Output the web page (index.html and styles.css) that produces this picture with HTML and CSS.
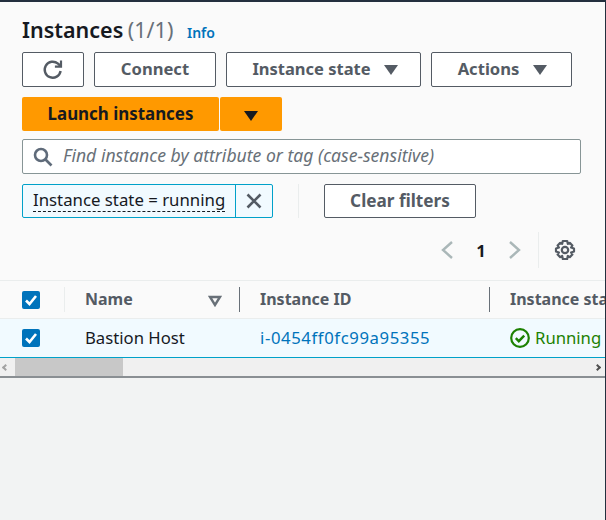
FILE: index.html
```html
<!DOCTYPE html>
<html lang="en">
<head>
    <meta charset="UTF-8">
    <meta name="viewport" content="width=device-width, initial-scale=1.0">
    <title>Instances</title>
    <link rel="stylesheet" href="styles.css">
</head>
<body>
    <div class="panel">
        <div class="panel-head">
            <h1 class="title">Instances <span class="count">(1/1)</span> <a class="info">Info</a></h1>

            <div class="actions">
                <button class="btn btn-refresh">
                    <svg width="22" height="22" viewBox="0 0 22 22" fill="none" stroke="#545b64" stroke-width="2.4">
                        <path d="M18.6 12a8 8 0 1 1-2.6-7.3L18.6 7"/>
                        <path d="M19 1.5V7.6h-6.1" stroke-width="2.2"/>
                    </svg>
                </button>
                <button class="btn btn-connect"><span class="btn-text">Connect</span></button>
                <button class="btn btn-state"><span class="btn-text">Instance state</span> <span class="caret"></span></button>
                <button class="btn btn-actions"><span class="btn-text">Actions</span> <span class="caret"></span></button>
            </div>

            <div class="launch">
                <button class="launch-main"><span class="btn-text">Launch instances</span></button>
                <button class="launch-drop"><span class="caret caret-dark"></span></button>
            </div>

            <div class="search">
                <svg width="20" height="20" viewBox="0 0 20 20" fill="none" stroke="#5f6b7a" stroke-width="2.6">
                    <circle cx="8" cy="8" r="6"/>
                    <path d="M12.5 12.5l6 6"/>
                </svg>
                <span class="search-text">Find instance by attribute or tag (case-sensitive)</span>
            </div>

            <div class="filters">
                <div class="token">
                    <span class="token-label"><span class="token-text">Instance state = running</span></span>
                    <span class="token-close">
                        <svg width="16" height="16" viewBox="0 0 16 16" fill="none" stroke="#545b64" stroke-width="2.6">
                            <path d="M1.5 1.5l13 13M14.5 1.5l-13 13"/>
                        </svg>
                    </span>
                </div>
                <span class="filters-sep"></span>
                <button class="btn btn-clear"><span class="btn-text">Clear filters</span></button>
            </div>

            <div class="pager">
                <svg width="14" height="20" viewBox="0 0 14 20" fill="none" stroke="#aab7b8" stroke-width="2.4">
                    <path d="M12 2L3 10l9 8"/>
                </svg>
                <span class="page-num">1</span>
                <svg width="14" height="20" viewBox="0 0 14 20" fill="none" stroke="#aab7b8" stroke-width="2.4">
                    <path d="M2 2l9 8-9 8"/>
                </svg>
                <span class="pager-sep"></span>
                <svg width="22" height="22" viewBox="0 0 22 22" fill="none" stroke="#545b64" stroke-width="2.2">
                    <path d="M8.8 2h4.4l.6 2.8 2-.9 2.6 2.6-1.3 2 2.9 1v3l-2.9 1 1.3 2-2.6 2.6-2-1.2-.6 3.1H8.8l-.6-3.1-2 1.2-2.6-2.6 1.3-2-2.9-1v-3l2.9-1-1.3-2 2.6-2.6 2 .9z" stroke-linejoin="round"/>
                    <circle cx="11" cy="11" r="3.2"/>
                </svg>
            </div>
        </div>

        <div class="table-wrap">
            <div class="row row-head">
                <div class="cell cell-check">
                    <span class="check"><svg width="18" height="18" viewBox="0 0 18 18" fill="none" stroke="#fff" stroke-width="2.6"><path d="M4 9.5l3.5 3.5L14 5"/></svg></span>
                    <span class="head-sep head-sep-light"></span>
                </div>
                <div class="cell cell-name">
                    Name
                    <svg class="sort" width="14" height="12" viewBox="0 0 14 12" fill="none" stroke="#687078" stroke-width="2.4"><path d="M2 2h10L7 10z"/></svg>
                    <span class="head-sep"></span>
                </div>
                <div class="cell cell-id">Instance ID <span class="head-sep"></span></div>
                <div class="cell cell-state">Instance state</div>
            </div>
            <div class="row row-body">
                <div class="cell cell-check">
                    <span class="check"><svg width="18" height="18" viewBox="0 0 18 18" fill="none" stroke="#fff" stroke-width="2.6"><path d="M4 9.5l3.5 3.5L14 5"/></svg></span>
                </div>
                <div class="cell cell-name">Bastion Host</div>
                <div class="cell cell-id"><a class="link">i-0454ff0fc99a95355</a></div>
                <div class="cell cell-state running">
                    <svg class="status-icon" width="20" height="20" viewBox="0 0 20 20" fill="none" stroke="#1d8102" stroke-width="2.2">
                        <circle cx="10" cy="10" r="8.8"/>
                        <path d="M5.8 10.2l3 3 5.4-5.6" stroke-width="2.4"/>
                    </svg>
                    Running
                </div>
            </div>
        </div>

        <div class="scrollbar">
            <span class="arrow arrow-left"></span>
            <span class="thumb"></span>
            <span class="arrow arrow-right"></span>
        </div>
    </div>
</body>
</html>
```

FILE: styles.css
```css
* {
    box-sizing: border-box;
}
html, body {
    height: 100%;
}
body {
    margin: 0;
    overflow: hidden;
    font-family: "Noto Sans", Arial, sans-serif;
    background-color: #f2f3f3;
    color: #16191f;
    border-top: 2px solid #232f3e;
    border-right: 1px solid #232f3e;
}
button {
    font-family: inherit;
    cursor: pointer;
}
.panel {
    background-color: #fafafa;
    border-bottom: 2px solid #8a8f93;
}
.panel-head {
    padding: 13px 24px 0 22px;
}
.title {
    margin: 0;
    height: 37px;
    font-size: 21.5px;
    font-weight: 600;
    line-height: 29px;
}
.count {
    margin-left: -1px;
    color: #687078;
    font-weight: 400;
}
.info {
    margin-left: 8px;
    color: #0073bb;
    font-size: 14px;
    font-weight: 600;
}
.actions {
    display: flex;
    gap: 10px;
}
.btn {
    display: flex;
    align-items: center;
    justify-content: center;
    height: 35px;
    padding: 0;
    background: #fff;
    border: 1px solid #545b64;
    border-radius: 2px;
    color: #545b64;
    font-size: 16.6px;
    font-weight: 700;
}
.btn-text {
    position: relative;
    top: -1px;
}
.btn-refresh {
    width: 62px;
}
.btn-connect {
    width: 122px;
}
.btn-state {
    width: 195px;
    gap: 13px;
    padding-left: 3px;
    font-size: 16.5px;
}
.btn-actions {
    width: 141px;
    gap: 14px;
    padding-left: 2px;
}
.caret {
    display: inline-block;
    width: 0;
    height: 0;
    border-left: 7px solid transparent;
    border-right: 7px solid transparent;
    border-top: 10px solid #545b64;
}
.caret-dark {
    border-top-color: #16191f;
}
.launch {
    display: flex;
    gap: 1px;
    margin-top: 10px;
}
.launch-main,
.launch-drop {
    height: 34px;
    background-color: #ff9900;
    border: none;
    border-radius: 2px;
    color: #16191f;
    font-size: 16.9px;
    font-weight: 700;
}
.launch-main {
    width: 197px;
    padding: 0;
}
.launch-drop {
    width: 62px;
}
.search {
    display: flex;
    align-items: center;
    gap: 10px;
    height: 35px;
    margin-top: 8px;
    padding-left: 10px;
    background: #fff;
    border: 1px solid #879596;
    border-radius: 2px;
}
.search-text {
    position: relative;
    top: -2px;
    color: #687078;
    font-size: 17.6px;
    font-style: italic;
}
.filters {
    display: flex;
    align-items: center;
    margin-top: 10px;
    height: 34px;
}
.token {
    display: flex;
    width: 251px;
    height: 34px;
    background-color: #f1faff;
    border: 1px solid #00a1c9;
    border-radius: 2px;
}
.token-label {
    flex: 1;
    padding-left: 10px;
    font-size: 16.8px;
    line-height: 30px;
}
.token-text {
    display: inline-block;
    line-height: 22px;
    border-bottom: 1px dashed #16191f;
}
.token-close {
    display: flex;
    align-items: center;
    justify-content: center;
    width: 37px;
    border-left: 1px solid #00a1c9;
}
.filters-sep {
    width: 1px;
    height: 34px;
    margin: 0 25px;
    background-color: #eaeded;
}
.btn-clear {
    width: 152px;
    height: 34px;
    font-size: 17.2px;
}
.pager {
    display: flex;
    align-items: center;
    justify-content: flex-end;
    height: 36px;
    margin-top: 14px;
    margin-right: 5px;
}
.page-num {
    width: 54px;
    text-align: center;
    font-size: 16.6px;
    font-weight: 700;
}
.pager-sep {
    width: 1px;
    height: 36px;
    margin: 0 15px 0 16px;
    background-color: #eaeded;
}
.table-wrap {
    margin-top: 12px;
    border-top: 1px solid #eaeded;
}
.row {
    display: flex;
    align-items: center;
}
.row-head {
    height: 38px;
    color: #545b64;
    font-size: 16px;
    font-weight: 700;
    border-bottom: 1px solid #eaeded;
}
.row-body {
    height: 39px;
    background-color: #f1faff;
    border-bottom: 1px solid #00a1c9;
    font-size: 16.7px;
}
.cell {
    display: flex;
    align-items: center;
    position: relative;
    height: 100%;
    white-space: nowrap;
    overflow: hidden;
}
.cell-check {
    width: 65px;
    padding-left: 22px;
}
.cell-name {
    width: 175px;
    padding: 0 0 2px 20px;
}
.cell-id {
    width: 250px;
    padding: 0 0 2px 20px;
}
.cell-state {
    flex: 1;
    padding: 0 0 2px 20px;
}
.check {
    display: flex;
    width: 18px;
    height: 18px;
    background-color: #0073bb;
    border-radius: 2px;
}
.head-sep {
    position: absolute;
    right: 0;
    top: 6px;
    width: 1px;
    height: 25px;
    background-color: #687078;
}
.head-sep-light {
    background-color: #eaeded;
}
.sort {
    position: absolute;
    right: 18px;
    top: 14px;
}
.link {
    color: #0073bb;
    letter-spacing: 0.6px;
}
.running {
    gap: 5px;
    color: #1d8102;
}
.status-icon {
    margin-top: 2px;
}
.scrollbar {
    display: flex;
    align-items: center;
    height: 18px;
    background-color: #f0f0f0;
}
.thumb {
    width: 108px;
    height: 18px;
    margin-left: 7px;
    background-color: #c8c8c8;
}
.arrow {
    width: 5px;
    height: 5px;
    border-left: 2px solid #a3a3a3;
    border-bottom: 2px solid #a3a3a3;
}
.arrow-left {
    margin-left: 3px;
    transform: rotate(45deg);
}
.arrow-right {
    margin-left: auto;
    margin-right: 5px;
    border-color: #505050;
    transform: rotate(225deg);
}
```
